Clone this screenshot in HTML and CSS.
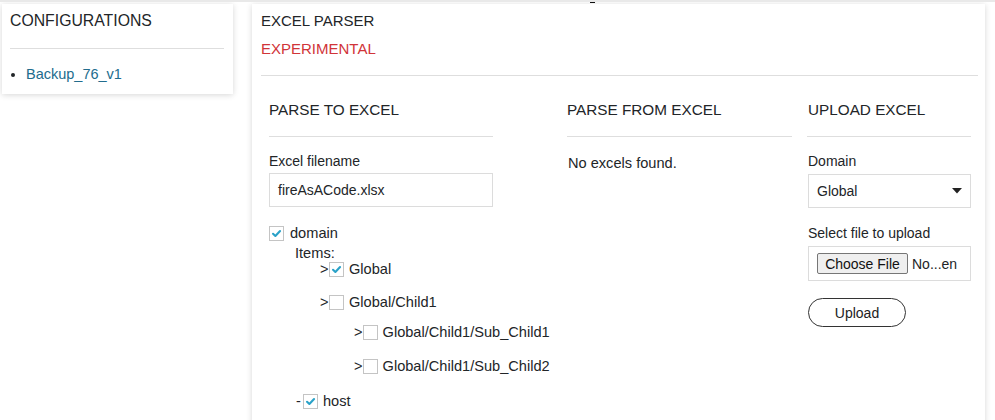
FILE: index.html
```html
<!DOCTYPE html>
<html>
<head>
<meta charset="utf-8">
<link rel="stylesheet" href="styles.css">
</head>
<body>
<span class="top-mark"></span>
<div class="page">
  <aside class="card side">
    <h2 class="title side-title">CONFIGURATIONS</h2>
    <hr class="rule">
    <ul class="config-list">
      <li><a href="#">Backup_76_v1</a></li>
    </ul>
  </aside>

  <main class="card main">
    <h1 class="title">EXCEL PARSER</h1>
    <div class="experimental">EXPERIMENTAL</div>
    <hr class="rule main-rule">

    <div class="cols">
      <section class="col col-to">
        <h3 class="col-title">PARSE TO EXCEL</h3>
        <hr class="rule">
        <label class="label">Excel filename</label>
        <div class="field filename">fireAsACode.xlsx</div>

        <div class="tree">
          <div class="row r-domain"><span class="cb on"><svg viewBox="0 0 15 15"><path d="M3.5 7.8 L6.2 10.4 L11.6 4.6"/></svg></span><span class="txt">domain</span></div>
          <div class="row r-items">Items:</div>
          <div class="row r-global"><span class="arrow">&gt;</span><span class="cb on"><svg viewBox="0 0 15 15"><path d="M3.5 7.8 L6.2 10.4 L11.6 4.6"/></svg></span><span class="txt">Global</span></div>
          <div class="row r-child"><span class="arrow">&gt;</span><span class="cb"></span><span class="txt">Global/Child1</span></div>
          <div class="row r-sub1"><span class="arrow">&gt;</span><span class="cb"></span><span class="txt">Global/Child1/Sub_Child1</span></div>
          <div class="row r-sub2"><span class="arrow">&gt;</span><span class="cb"></span><span class="txt">Global/Child1/Sub_Child2</span></div>
          <div class="row r-host"><span class="arrow">-</span><span class="cb on"><svg viewBox="0 0 15 15"><path d="M3.5 7.8 L6.2 10.4 L11.6 4.6"/></svg></span><span class="txt">host</span></div>
        </div>
      </section>

      <section class="col col-from">
        <h3 class="col-title">PARSE FROM EXCEL</h3>
        <hr class="rule">
        <p class="empty">No excels found.</p>
      </section>

      <section class="col col-up">
        <h3 class="col-title">UPLOAD EXCEL</h3>
        <hr class="rule">
        <label class="label">Domain</label>
        <div class="field select">
          <span>Global</span>
          <svg class="caret" viewBox="0 0 10 6"><path d="M0 0 H10 L5 5.5 Z"/></svg>
        </div>
        <label class="label label-file">Select file to upload</label>
        <div class="field file">
          <button class="choose" type="button">Choose File</button>
          <span class="nofile">No...en</span>
        </div>
        <button class="upload" type="button">Upload</button>
      </section>
    </div>
  </main>
</div>
</body>
</html>
```

FILE: styles.css
```css
* { box-sizing: border-box; }

html, body {
  margin: 0;
  padding: 0;
  background: #ffffff;
}

body {
  font-family: "Liberation Sans", Arial, sans-serif;
  font-size: 14px;
  color: #222528;
  border-top: 2px solid #e9e9e9;
  position: relative;
  overflow: hidden;
  height: 420px;
}

.top-mark {
  position: absolute;
  top: -2px;
  left: 590px;
  width: 5px;
  height: 3px;
  background: #111;
}

.page {
  display: flex;
  align-items: flex-start;
  padding: 2px 0 0 2px;
}

.card {
  background: #fff;
  box-shadow: 0 1px 6px rgba(0, 0, 0, 0.16);
}

.title {
  margin: 0;
  font-size: 15px;
  font-weight: normal;
  line-height: 20px;
}

.side-title {
  font-size: 15.8px;
}

.rule {
  border: 0;
  border-top: 1px solid #dedede;
  margin: 0;
  height: 0;
}

/* left card */
.side {
  width: 231px;
  height: 90px;
  padding: 7px 9px 0 8px;
}

.side .rule {
  margin-top: 17px;
}

.config-list {
  margin: 15px 0 0;
  padding-left: 16px;
  line-height: 20px;
}

.config-list a {
  color: #226c8d;
  text-decoration: none;
  font-size: 14.5px;
}

/* main card */
.main {
  margin-left: 19px;
  width: 733px;
  min-height: 460px;
  padding: 7px 7px 0 9px;
}

.experimental {
  margin-top: 8px;
  color: #d13439;
  font-size: 15px;
  line-height: 20px;
}

.main-rule {
  margin-top: 16px;
}

.cols {
  display: grid;
  grid-template-columns: 298px 240px 164px;
  padding-left: 8px;
}

.col-to { padding-right: 74px; }
.col-from { padding-right: 15px; }
.col-up .col-title,
.col-up .label,
.col-up .field,
.col-up .upload { margin-left: 1px; }

.col-title {
  margin: 24px 0 0;
  font-size: 15.3px;
  font-weight: normal;
  line-height: 20px;
}

.col .rule {
  margin-top: 16px;
}

.label {
  display: block;
  margin-top: 14px;
  line-height: 20px;
}

.field {
  margin-top: 3px;
  height: 34px;
  border: 1px solid #dcdcdc;
  padding: 0 8px;
  display: flex;
  align-items: center;
  font-size: 14px;
}

.filename {
  margin-top: 2px;
}

.empty {
  margin: 16px 0 0 1px;
  line-height: 20px;
  font-size: 14.6px;
}

/* tree */
.tree {
  margin-top: 18px;
  font-size: 14.6px;
}

.row {
  display: flex;
  align-items: center;
  height: 16px;
  line-height: 16px;
}

.r-items { margin-top: 4px; padding-left: 26px; }
.r-global { padding-left: 51px; }
.r-child { margin-top: 17px; padding-left: 51px; }
.r-sub1 { margin-top: 14px; padding-left: 85px; }
.r-sub2 { margin-top: 18px; padding-left: 85px; }
.r-host { margin-top: 19px; padding-left: 27px; }

.arrow {
  width: 9px;
}

.r-host .arrow { width: 7px; }

.cb {
  width: 15px;
  height: 15px;
  border: 1px solid #c4c4c4;
  background: #fff;
  flex: none;
  display: inline-flex;
}

.cb svg {
  width: 13px;
  height: 13px;
}

.cb path {
  fill: none;
  stroke: #2aa2c8;
  stroke-width: 2.4;
  stroke-linecap: round;
  stroke-linejoin: round;
}

.txt {
  margin-left: 5px;
}

.r-domain .txt { margin-left: 6px; }

/* upload column */
.select {
  justify-content: space-between;
  padding-right: 8px;
  width: 163px;
}

.caret {
  width: 10px;
  height: 6px;
}

.caret path { fill: #222; }

.label-file {
  margin-top: 15px;
}

.file {
  height: 35px;
  padding-left: 8px;
  width: 163px;
}

.choose {
  font-family: "Liberation Sans", Arial, sans-serif;
  font-size: 14px;
  color: #111;
  height: 21px;
  width: 91px;
  padding: 0;
  background: #efefef;
  border: 1px solid #767676;
  border-radius: 2px;
  flex: none;
}

.nofile {
  margin-left: 4px;
}

.upload {
  display: block;
  margin-top: 17px;
  width: 98px;
  height: 29px;
  border: 1px solid #333;
  border-radius: 15px;
  background: #fff;
  font-family: "Liberation Sans", Arial, sans-serif;
  font-size: 14px;
  color: #222;
}
```
